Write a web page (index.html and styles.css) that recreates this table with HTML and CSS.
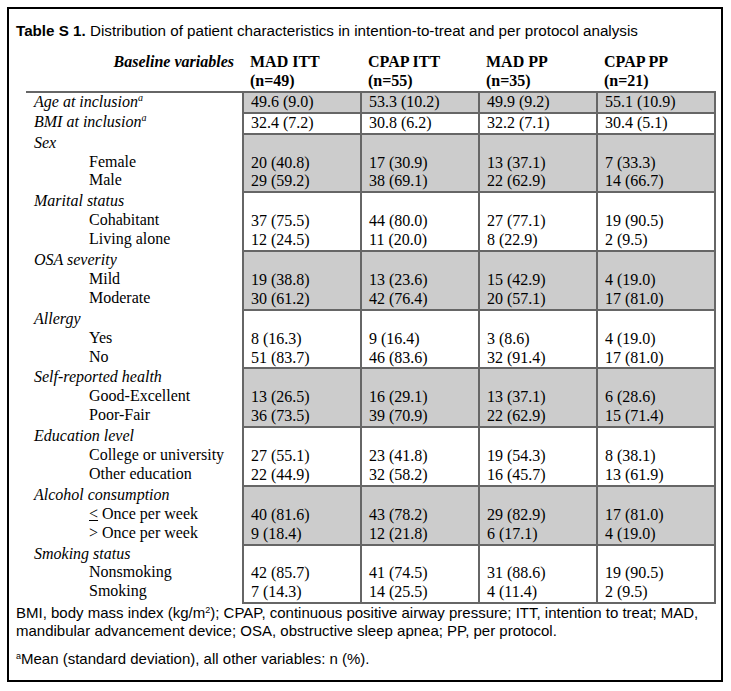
FILE: index.html
```html
<!DOCTYPE html>
<html>
<head>
<meta charset="utf-8">
<link rel="stylesheet" href="styles.css">
</head>
<body>
<div class="sheet">
  <p class="caption"><b>Table S 1.</b> Distribution of patient characteristics in intention-to-treat and per protocol analysis</p>
  <table class="stats">
    <colgroup>
      <col class="c-label"><col class="c-data"><col class="c-data"><col class="c-data"><col class="c-data">
    </colgroup>
    <thead>
      <tr>
        <th class="h-label">Baseline variables</th>
        <th>MAD ITT<br>(n=49)</th>
        <th>CPAP ITT<br>(n=55)</th>
        <th>MAD PP<br>(n=35)</th>
        <th>CPAP PP<br>(n=21)</th>
      </tr>
    </thead>
    <tbody>
      <tr class="shade">
        <td class="lab"><span class="grp">Age at inclusion<sup>a</sup></span></td>
        <td>49.6 (9.0)</td><td>53.3 (10.2)</td><td>49.9 (9.2)</td><td>55.1 (10.9)</td>
      </tr>
      <tr>
        <td class="lab"><span class="grp">BMI at inclusion<sup>a</sup></span></td>
        <td>32.4 (7.2)</td><td>30.8 (6.2)</td><td>32.2 (7.1)</td><td>30.4 (5.1)</td>
      </tr>
      <tr class="shade">
        <td class="lab"><span class="grp">Sex</span><span class="sub">Female</span><span class="sub">Male</span></td>
        <td><span class="ln"></span><span class="ln">20 (40.8)</span><span class="ln">29 (59.2)</span></td>
        <td><span class="ln"></span><span class="ln">17 (30.9)</span><span class="ln">38 (69.1)</span></td>
        <td><span class="ln"></span><span class="ln">13 (37.1)</span><span class="ln">22 (62.9)</span></td>
        <td><span class="ln"></span><span class="ln">7 (33.3)</span><span class="ln">14 (66.7)</span></td>
      </tr>
      <tr>
        <td class="lab"><span class="grp">Marital status</span><span class="sub">Cohabitant</span><span class="sub">Living alone</span></td>
        <td><span class="ln"></span><span class="ln">37 (75.5)</span><span class="ln">12 (24.5)</span></td>
        <td><span class="ln"></span><span class="ln">44 (80.0)</span><span class="ln">11 (20.0)</span></td>
        <td><span class="ln"></span><span class="ln">27 (77.1)</span><span class="ln">8 (22.9)</span></td>
        <td><span class="ln"></span><span class="ln">19 (90.5)</span><span class="ln">2 (9.5)</span></td>
      </tr>
      <tr class="shade">
        <td class="lab"><span class="grp">OSA severity</span><span class="sub">Mild</span><span class="sub">Moderate</span></td>
        <td><span class="ln"></span><span class="ln">19 (38.8)</span><span class="ln">30 (61.2)</span></td>
        <td><span class="ln"></span><span class="ln">13 (23.6)</span><span class="ln">42 (76.4)</span></td>
        <td><span class="ln"></span><span class="ln">15 (42.9)</span><span class="ln">20 (57.1)</span></td>
        <td><span class="ln"></span><span class="ln">4 (19.0)</span><span class="ln">17 (81.0)</span></td>
      </tr>
      <tr>
        <td class="lab"><span class="grp">Allergy</span><span class="sub">Yes</span><span class="sub">No</span></td>
        <td><span class="ln"></span><span class="ln">8 (16.3)</span><span class="ln">51 (83.7)</span></td>
        <td><span class="ln"></span><span class="ln">9 (16.4)</span><span class="ln">46 (83.6)</span></td>
        <td><span class="ln"></span><span class="ln">3 (8.6)</span><span class="ln">32 (91.4)</span></td>
        <td><span class="ln"></span><span class="ln">4 (19.0)</span><span class="ln">17 (81.0)</span></td>
      </tr>
      <tr class="shade">
        <td class="lab"><span class="grp">Self-reported health</span><span class="sub">Good-Excellent</span><span class="sub">Poor-Fair</span></td>
        <td><span class="ln"></span><span class="ln">13 (26.5)</span><span class="ln">36 (73.5)</span></td>
        <td><span class="ln"></span><span class="ln">16 (29.1)</span><span class="ln">39 (70.9)</span></td>
        <td><span class="ln"></span><span class="ln">13 (37.1)</span><span class="ln">22 (62.9)</span></td>
        <td><span class="ln"></span><span class="ln">6 (28.6)</span><span class="ln">15 (71.4)</span></td>
      </tr>
      <tr>
        <td class="lab"><span class="grp">Education level</span><span class="sub">College or university</span><span class="sub">Other education</span></td>
        <td><span class="ln"></span><span class="ln">27 (55.1)</span><span class="ln">22 (44.9)</span></td>
        <td><span class="ln"></span><span class="ln">23 (41.8)</span><span class="ln">32 (58.2)</span></td>
        <td><span class="ln"></span><span class="ln">19 (54.3)</span><span class="ln">16 (45.7)</span></td>
        <td><span class="ln"></span><span class="ln">8 (38.1)</span><span class="ln">13 (61.9)</span></td>
      </tr>
      <tr class="shade">
        <td class="lab"><span class="grp">Alcohol consumption</span><span class="sub"><u>&lt;</u> Once per week</span><span class="sub">&gt; Once per week</span></td>
        <td><span class="ln"></span><span class="ln">40 (81.6)</span><span class="ln">9 (18.4)</span></td>
        <td><span class="ln"></span><span class="ln">43 (78.2)</span><span class="ln">12 (21.8)</span></td>
        <td><span class="ln"></span><span class="ln">29 (82.9)</span><span class="ln">6 (17.1)</span></td>
        <td><span class="ln"></span><span class="ln">17 (81.0)</span><span class="ln">4 (19.0)</span></td>
      </tr>
      <tr>
        <td class="lab"><span class="grp">Smoking status</span><span class="sub">Nonsmoking</span><span class="sub">Smoking</span></td>
        <td><span class="ln"></span><span class="ln">42 (85.7)</span><span class="ln">7 (14.3)</span></td>
        <td><span class="ln"></span><span class="ln">41 (74.5)</span><span class="ln">14 (25.5)</span></td>
        <td><span class="ln"></span><span class="ln">31 (88.6)</span><span class="ln">4 (11.4)</span></td>
        <td><span class="ln"></span><span class="ln">19 (90.5)</span><span class="ln">2 (9.5)</span></td>
      </tr>
    </tbody>
  </table>
  <p class="note">BMI, body mass index (kg/m<sup>2</sup>); CPAP, continuous positive airway pressure; ITT, intention to treat; MAD, mandibular advancement device; OSA, obstructive sleep apnea; PP, per protocol.</p>
  <p class="note note-a"><sup>a</sup>Mean (standard deviation), all other variables: n (%).</p>
</div>
</body>
</html>
```
FILE: styles.css
```css
html, body {
  margin: 0;
  padding: 0;
  background: #fff;
}

.sheet {
  box-sizing: border-box;
  margin: 7px;
  width: 716px;
  height: 675px;
  border: 2px solid #000;
  padding: 13px 6px 0 7px;
  font-family: "Liberation Sans", Arial, sans-serif;
  color: #000;
}

.caption {
  margin: 0;
  font-size: 15.2px;
  line-height: 17px;
  white-space: nowrap;
}

.stats {
  margin: 14px 0 0 10px;
  border-collapse: collapse;
  table-layout: fixed;
  width: 688px;
  font-family: "Liberation Serif", "Times New Roman", serif;
  font-size: 16px;
  line-height: 18.9px;
}

.c-label { width: 217px; }
.c-data { width: 118px; }

.stats th {
  font-weight: bold;
  text-align: left;
  vertical-align: top;
  padding: 0 0 0 7px;
  border-bottom: 2px solid #666;
}

.stats th.h-label {
  font-style: italic;
  text-align: right;
  padding: 0 9px 0 0;
}

.stats td {
  padding: 0 0 0 7px;
  vertical-align: top;
  border: 2px solid #666;
  white-space: nowrap;
}

.stats td.lab {
  border: none;
  padding-left: 8px;
  background: #fff;
}

.stats tbody tr:first-child td.lab {
  border-top: 2px solid #666;
}

.shade td {
  background: #cccccc;
}

.grp {
  display: block;
  font-style: italic;
}

.grp sup {
  font-size: 10px;
  line-height: 0;
  vertical-align: 6px;
}

.sub {
  display: block;
  padding-left: 55px;
}

.ln {
  display: block;
  min-height: 18.9px;
}

.note {
  margin: 0;
  font-size: 15px;
  line-height: 17.5px;
  width: 700px;
}

.note sup {
  font-size: 9px;
  line-height: 0;
  vertical-align: 5px;
}

.note-a {
  margin-top: 11px;
}
```
